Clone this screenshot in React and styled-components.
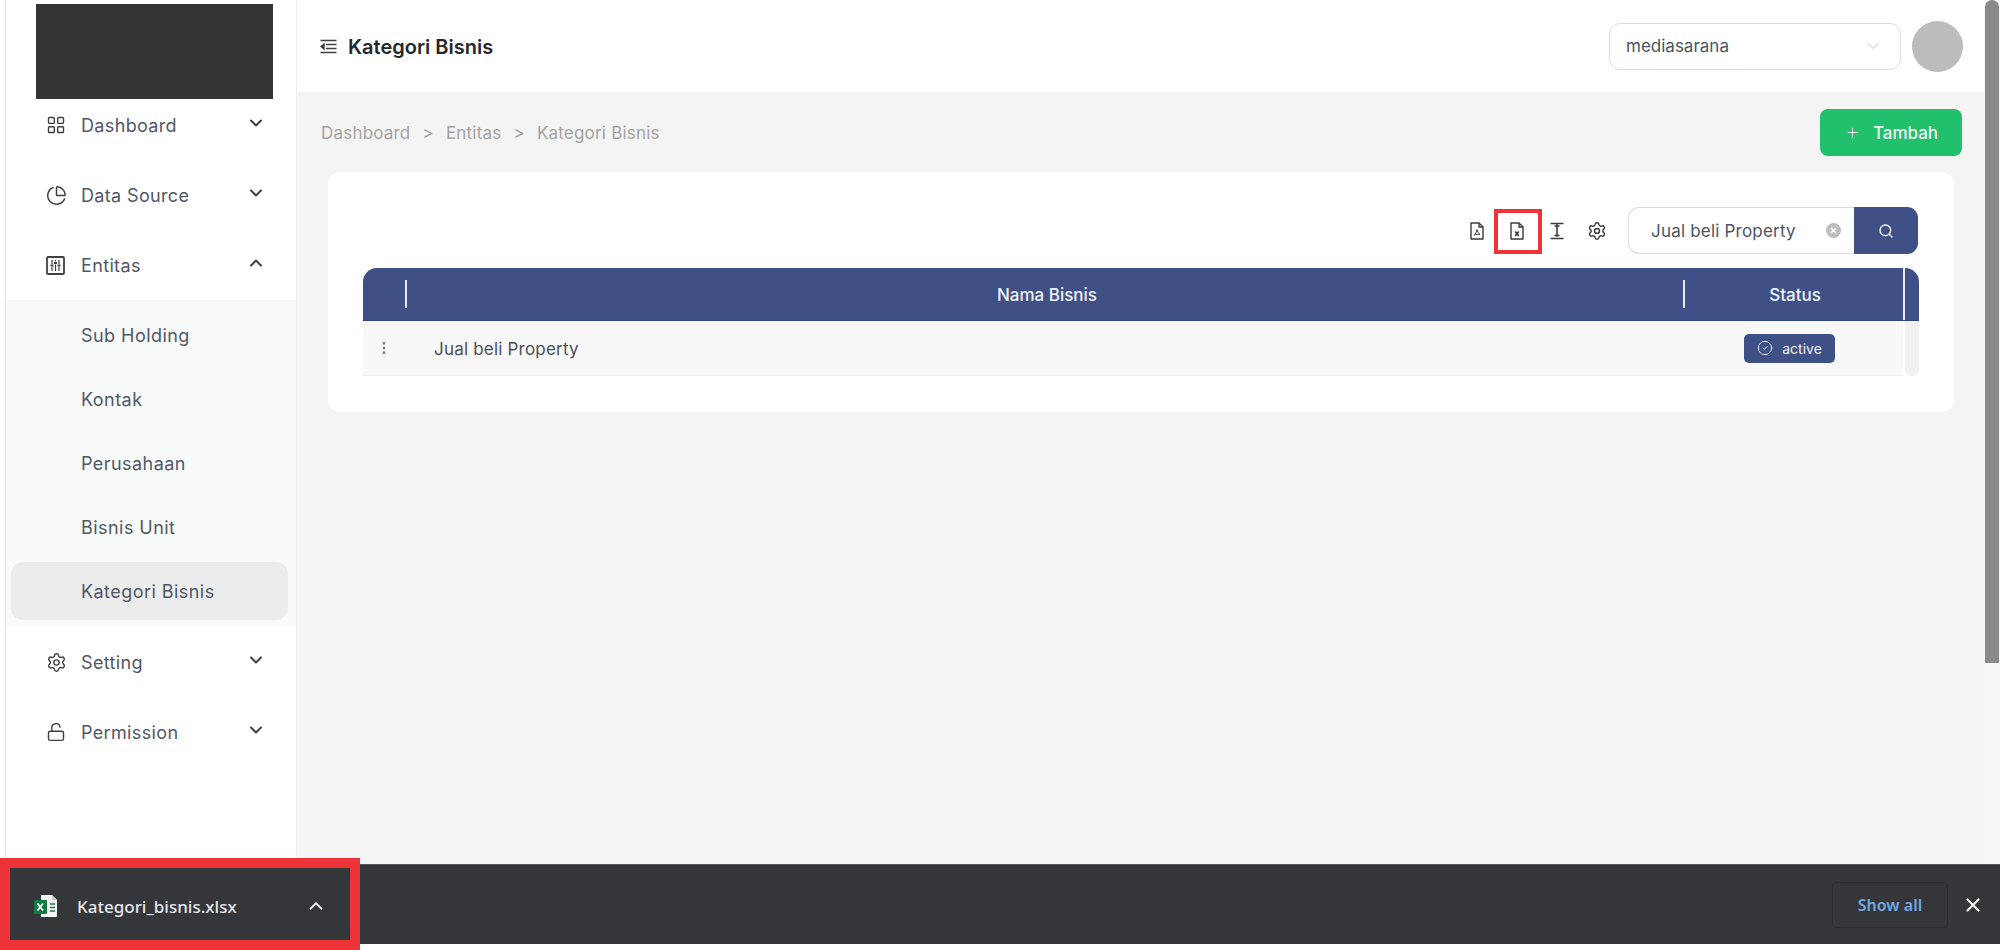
import React from "react";
import styled, { createGlobalStyle } from "styled-components";
import { LayoutGrid, PieChart, Settings, LockOpen, ChevronDown, ChevronUp, Search, CircleCheck, Plus, X, MoreVertical } from "lucide-react";

const Global = createGlobalStyle`
  html, body { margin: 0; padding: 0; background: #fff; }
  body { font-family: Inter, "Noto Sans", sans-serif; overflow: hidden; }
  * { box-sizing: border-box; }
`;

const Page = styled.div`
  position: relative; width: 2000px; height: 950px; display: flex; flex-direction: column; background: #fff; overflow: hidden;
`;
const Main = styled.div`display: flex; height: 864px; flex: none;`;
const Sidebar = styled.aside`
  width: 292px; margin-left: 5px; flex: none; background: #fff;
  border-left: 1px solid #e4e4e4; border-right: 1px solid #f0f0f0;
`;
const Logo = styled.div`width: 237px; height: 95px; margin: 4px 0 -9px 30px; background: #353434;`;
const MenuRow = styled.div`
  height: 70px; display: flex; align-items: center; padding: 0 30px 0 40px; color: #4b5563;
  font-size: 18px; letter-spacing: 0.35px; position: relative;
  svg { flex: none; }
`;
const MenuIcon = styled.span`width: 35px; display: flex; align-items: center; color: #3f3f46;`;
const MenuLabel = styled.span`flex: 1; color: #505868;`;
const Chevron = styled.span`display: flex; color: #3f3f46; margin-top: -4px;`;
const SubMenu = styled.div`background: #f9fafa; padding: 3px 5px 4px 5px;`;
const SubRow = styled.div`
  height: 64px; display: flex; align-items: center;
  `;
const SubLabel = styled.div`
  width: 277px; height: ${p => (p.$active ? "58px" : "64px")}; border-radius: 12px; display: flex; align-items: center;
  padding-left: 70px; font-size: 18px; letter-spacing: 0.45px; color: #505868; background: ${p => (p.$active ? "#ececec" : "transparent")};
`;
const Content = styled.div`flex: 1; background: #f4f4f4; min-width: 0; display: flex; flex-direction: column;`;
const Header = styled.header`
  height: 92px; background: #fff; display: flex; align-items: center; padding: 0 21px 0 23px; flex: none;
`;
const Title = styled.h1`
  flex: 1; margin: 2px 0 0 11px; font-size: 20px; font-weight: 600; color: #27272a; line-height: 1;
`;
const SelectBox = styled.div`
  width: 292px; height: 47px; border: 1px solid #dcdcdc; border-radius: 11px; display: flex; align-items: center;
  justify-content: space-between; padding: 0 17px 0 16px; font-size: 17px; color: #4b5563; background: #fff;
`;
const Avatar = styled.div`width: 51px; height: 51px; border-radius: 50%; background: #bdbcbc; margin-left: 11px;`;
const CrumbBar = styled.div`
  display: flex; align-items: center; justify-content: space-between; padding: 1px 22px 0 24px; height: 80px; flex: none;
`;
const Crumbs = styled.div`display: flex; gap: 12px; font-size: 17px; letter-spacing: 0.2px; color: #a3a3a3;`;
const AddButton = styled.button`
  width: 142px; height: 47px; border: none; border-radius: 8px; background: #20c06c; color: #f4f4f4; display: flex; align-items: center;
  justify-content: center; gap: 12px; font: 500 17px Inter, sans-serif; padding: 0;
`;
const Card = styled.section`
  margin: 0 30px 0 31px; height: 240px; background: #fff; border-radius: 12px; padding: 35px 34px 0 34px; flex: none;
`;
const Toolbar = styled.div`display: flex; justify-content: flex-end; align-items: center; height: 47px; padding-right: 2px;`;
const ToolIcon = styled.span`width: 40px; display: flex; justify-content: center; color: #3a3a3a;`;
const SearchGroup = styled.div`display: flex; margin-left: 11px; height: 47px; width: 290px;`;
const SearchInput = styled.div`
  flex: 1; border: 1px solid #dcdcdc; border-right: none; border-radius: 11px 0 0 11px; display: flex; align-items: center;
  justify-content: space-between; padding: 0 13px 0 22px; font-size: 17px; letter-spacing: 0.2px; color: #4b5563;
`;
const SearchBtn = styled.div`
  width: 64px; background: #3f5087; border-radius: 0 11px 11px 0; display: flex; align-items: center; justify-content: center; color: #fff;
`;
const Table = styled.div`margin: 14px 0 0 1px; width: 1556px;`;
const HeadRow = styled.div`
  height: 53px; background: #3f5087; border-radius: 14px 14px 0 0; display: grid; grid-template-columns: 44px 1278px 218px 16px; color: #f1f3f8;
  border-bottom: 1px solid #2f4685; margin-top: 1px;
`;
const HeadCell = styled.div`
  display: flex; align-items: center; justify-content: center; font-size: 17px; font-weight: 500; position: relative; padding: 2px 0 0 2px;
  &::after {
    content: ""; display: ${p => (p.$sep ? "block" : "none")}; position: absolute; right: 0; top: 12px; bottom: 12px; width: 2px; background: #e6e9f2;
  }
`;
const Gutter = styled.div`border-left: 2px solid #e6e9f2;`;
const BodyRow = styled.div`
  height: 55px; display: grid; grid-template-columns: 44px 1278px 218px 16px; align-items: center;
`;
const RowMenu = styled.div`height: 100%; background: #f8f8f8; border-bottom: 1px solid #efefef; display: flex; align-items: center; justify-content: center; color: #6b7280; padding-right: 3px;`;
const NameCell = styled.div`
  height: 100%; background: #f8f8f8; border-bottom: 1px solid #efefef; display: flex; align-items: center; padding: 2px 0 0 27px; font-size: 17px; letter-spacing: 0.2px; color: #4a4f5c;
`;
const StatusCell = styled.div`height: 100%; background: #f8f8f8; border-bottom: 1px solid #efefef; display: flex; align-items: center; justify-content: center;`;
const Badge = styled.span`
  height: 29px; width: 91px; border-radius: 5px; background: #3f5087; color: #f1f3f8; display: inline-flex; align-items: center; justify-content: center;
  gap: 9px; font-size: 14px; font-weight: 400; margin-right: 9px;
`;
const ScrollGutter = styled.div`height: 100%; background: #f1f1f1; border-radius: 0 0 8px 8px; margin-left: 2px;`;
const PageScroll = styled.div`width: 16px; flex: none; background: #f8f8f8;`;
const PageThumb = styled.div`height: 663px; width: 14px; margin-left: 1px; background: #8a8a8a; border-radius: 7px 7px 0 0;`;
const DownloadBar = styled.footer`
  height: 80px; flex: none; background: #35363a; display: flex; align-items: center; color: #e8eaed; border-top: 1px solid #55565a;
`;
const FileItem = styled.div`
  width: 350px; height: 100%; flex: none; display: flex; align-items: center; padding: 3px 0 0 34px;
`;
const FileName = styled.span`margin-left: 19px; flex: 1; font: 500 17px "Noto Sans", "Open Sans", sans-serif; color: #e6e8ec;`;
const FileChevron = styled.span`display: flex; margin-right: 23px; color: #e8eaed;`;
const Spacer = styled.div`flex: 1;`;
const ShowAll = styled.div`
  width: 116px; height: 46px; border: 1px solid #2c2d31; border-radius: 4px; display: flex; align-items: center; justify-content: center;
  color: #6ea8e6; font: 600 16px "Noto Sans", "Open Sans", sans-serif;
`;
const CloseBtn = styled.div`display: flex; color: #f1f1f1; margin: 0 16px 0 14px;`;
const Marker = styled.div`
  position: absolute; border-style: solid; border-color: #ee3338; pointer-events: none;
  left: ${p => p.$x}px; top: ${p => p.$y}px; width: ${p => p.$w}px; height: ${p => p.$h}px; border-width: ${p => p.$t}px;
`;

const SlidersBox = () => (
  <svg width="19" height="19" viewBox="0 0 19 19" fill="none" stroke="currentColor" strokeLinecap="butt">
    <rect x="1" y="1" width="17" height="17" rx="1" strokeWidth="1.8" />
    <path d="M6 4v4M6 11v4M9.500 4v1.500M9.500 8.500V15M13 4v4M13 11v4" strokeWidth="1.200" />
    <path d="M4.500 9.500h3M8 7h3M11.500 9.500h3" strokeWidth="1.800" />
  </svg>
);
const IndentIcon = () => (
  <svg width="17" height="15" viewBox="0 0 17 15" fill="none" stroke="#3f3f46" strokeWidth="1.4" style={{ flex: "none" }}>
    <path d="M0.5 1.5h16M6 5.5h10.5M6 9.5h10.5M0.5 13.5h16" />
    <path d="M4 5l-3 2.5L4 10z" fill="#3f3f46" />
  </svg>
);
const FileGlyph = ({ kind }) => (
  <svg width="16" height="18" viewBox="0 0 16 18" fill="none" stroke="currentColor" strokeWidth="1.4">
    <path d="M2 1h8l4 4v12H2z" strokeLinejoin="round" />
    <path d="M10 1v4h4" />
    {kind === "pdf" ? (
      <path d="M8 7.500c-.2 2-1.400 4.400-3 5.600 2-.8 4-1 6-.6-1.400-1-2.500-3-3-5z" strokeWidth="1" />
    ) : (
      <path d="M6.200 9.500l3.600 4.500M9.800 9.500l-3.600 4.500" strokeWidth="1.700" />
    )}
  </svg>
);
const HeightIcon = () => (
  <svg width="16" height="18" viewBox="0 0 16 18" fill="none" stroke="currentColor" strokeWidth="1.600">
    <path d="M1.500 1.500h13M1.500 16.500h13M8 2v12.500" />
    <path d="M5.500 4h5M5.500 13.500h5" />
  </svg>
);
const ClearIcon = () => (
  <svg width="15" height="15" viewBox="0 0 15 15">
    <circle cx="7.500" cy="7.500" r="7.500" fill="#bfbfbf" />
    <path d="M5 5l5 5M10 5l-5 5" stroke="#fff" strokeWidth="1.500" />
  </svg>
);
const ExcelIcon = () => (
  <svg width="24" height="24" viewBox="0 0 24 24">
    <path d="M7 1h11l5 5v17H7z" fill="#f4f5f5" />
    <path d="M18 1v5h5" fill="#c9cccc" />
    <path d="M16 10h5M16 13.500h5M16 17h5" stroke="#1d7a45" strokeWidth="1.500" />
    <rect x="0" y="6" width="13" height="14" rx="1" fill="#107c41" />
    <path d="M3.500 9.500l5.500 7M9 9.500l-5.500 7" stroke="#fff" strokeWidth="1.800" />
  </svg>
);

const topMenu = [
  { label: "Dashboard", icon: <LayoutGrid size={20} strokeWidth={1.7} /> },
  { label: "Data Source", icon: <PieChart size={21} strokeWidth={1.7} /> },
  { label: "Entitas", icon: <SlidersBox />, open: true },
];
const subMenu = ["Sub Holding", "Kontak", "Perusahaan", "Bisnis Unit", "Kategori Bisnis"];
const bottomMenu = [
  { label: "Setting", icon: <Settings size={21} strokeWidth={1.6} /> },
  { label: "Permission", icon: <LockOpen size={20} strokeWidth={1.7} /> },
];

const MenuItem = ({ item }) => (
  <MenuRow>
    <MenuIcon>{item.icon}</MenuIcon>
    <MenuLabel>{item.label}</MenuLabel>
    <Chevron>{item.open ? <ChevronUp size={20} strokeWidth={2.4} /> : <ChevronDown size={20} strokeWidth={2.4} />}</Chevron>
  </MenuRow>
);

export default function App() {
  return (
    <Page>
      <Global />
      <Main>
        <Sidebar>
          <Logo />
          {topMenu.map(m => <MenuItem key={m.label} item={m} />)}
          <SubMenu>
            {subMenu.map((s, i) => (
              <SubRow key={s}><SubLabel $active={i === subMenu.length - 1}>{s}</SubLabel></SubRow>
            ))}
          </SubMenu>
          {bottomMenu.map(m => <MenuItem key={m.label} item={m} />)}
        </Sidebar>
        <Content>
          <Header>
            <IndentIcon />
            <Title>Kategori Bisnis</Title>
            <SelectBox>mediasarana<ChevronDown size={20} strokeWidth={1.2} color="#bdbdbd" /></SelectBox>
            <Avatar />
          </Header>
          <CrumbBar>
            <Crumbs>
              <span>Dashboard</span><span>&gt;</span><span>Entitas</span><span>&gt;</span><span>Kategori Bisnis</span>
            </Crumbs>
            <AddButton><Plus size={17} strokeWidth={1.4} />Tambah</AddButton>
          </CrumbBar>
          <Card>
            <Toolbar>
              <ToolIcon><FileGlyph kind="pdf" /></ToolIcon>
              <ToolIcon><FileGlyph kind="xls" /></ToolIcon>
              <ToolIcon><HeightIcon /></ToolIcon>
              <ToolIcon><Settings size={20} strokeWidth={1.7} /></ToolIcon>
              <SearchGroup>
                <SearchInput>Jual beli Property<ClearIcon /></SearchInput>
                <SearchBtn><Search size={16} strokeWidth={2} /></SearchBtn>
              </SearchGroup>
            </Toolbar>
            <Table>
              <HeadRow>
                <HeadCell $sep />
                <HeadCell $sep>Nama Bisnis</HeadCell>
                <HeadCell>Status</HeadCell>
                <Gutter />
              </HeadRow>
              <BodyRow>
                <RowMenu><MoreVertical size={16} strokeWidth={2} /></RowMenu>
                <NameCell>Jual beli Property</NameCell>
                <StatusCell><Badge><CircleCheck size={16} strokeWidth={1.4} />active</Badge></StatusCell>
                <ScrollGutter />
              </BodyRow>
            </Table>
          </Card>
        </Content>
        <PageScroll><PageThumb /></PageScroll>
      </Main>
      <DownloadBar>
        <FileItem>
          <ExcelIcon />
          <FileName>Kategori_bisnis.xlsx</FileName>
          <FileChevron><ChevronUp size={22} strokeWidth={2} /></FileChevron>
        </FileItem>
        <Spacer />
        <ShowAll>Show all</ShowAll>
        <CloseBtn><X size={22} strokeWidth={2.4} /></CloseBtn>
      </DownloadBar>
      <Marker $x={1494} $y={209} $w={48} $h={45} $t={4} />
      <Marker $x={0} $y={858} $w={360} $h={92} $t={10} />
    </Page>
  );
}
